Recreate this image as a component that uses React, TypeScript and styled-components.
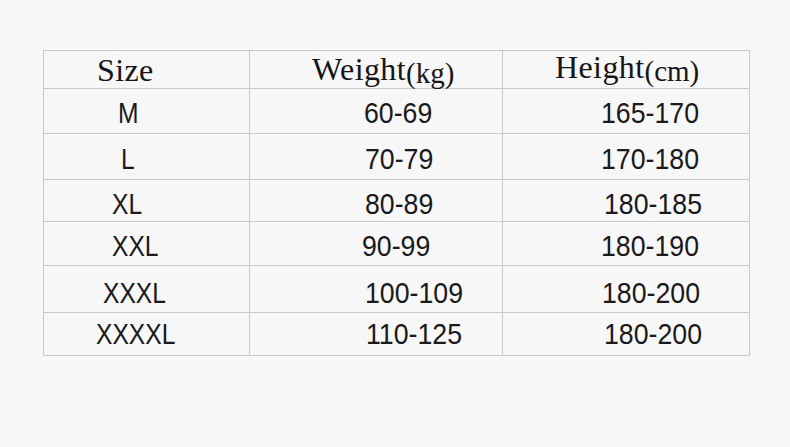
import React from "react";
import styled, { createGlobalStyle } from "styled-components";

const Global = createGlobalStyle`
  html, body { margin: 0; padding: 0; background: #f7f7f7; }
  body { width: 790px; height: 447px; overflow: hidden; }
`;

const Page = styled.div`
  box-sizing: border-box;
  width: 790px;
  height: 447px;
  padding: 50px 0 0 43px;
  background: #f7f7f7;
`;

const Table = styled.div`
  display: grid;
  grid-template-columns: 206px 253px 247px;
  width: 707px;
  box-sizing: border-box;
  border-top: 1px solid #c9c9c9;
  border-left: 1px solid #c9c9c9;
`;

const Cell = styled.div<{ $h: number; $top: number; $left: number }>`
  box-sizing: border-box;
  height: ${(p) => p.$h}px;
  padding: ${(p) => p.$top}px 0 0 ${(p) => p.$left}px;
  border-right: 1px solid #c9c9c9;
  border-bottom: 1px solid #c9c9c9;
  white-space: nowrap;
  overflow: visible;
  color: #161616;
`;

const HeadText = styled.span`
  font-family: "Liberation Serif", "Times New Roman", serif;
  font-size: 32px;
  line-height: 1;
  display: inline-block;
  letter-spacing: 0.4px;
`;

const Unit = styled.span`
  font-size: 29px;
  position: relative;
  top: 3px;
  letter-spacing: 0;
`;

const BodyText = styled.span<{ $squeeze: number }>`
  font-family: "Liberation Sans", Arial, sans-serif;
  font-size: 30px;
  line-height: 1;
  display: inline-block;
  transform: scaleX(${(p) => p.$squeeze});
  transform-origin: left center;
  color: #1a1a1a;
`;

type Row = { h: number; top: number; cells: { text: string; left: number }[] };

const header = {
  h: 38,
  cells: [
    { main: "Size", unit: "", left: 53, top: 3 },
    { main: "Weight", unit: "(kg)", left: 62, top: 2 },
    { main: "Height", unit: "(cm)", left: 52, top: 0 },
  ],
};

const rows: Row[] = [
  { h: 45, top: 9, cells: [{ text: "M", left: 74 }, { text: "60-69", left: 114 }, { text: "165-170", left: 98 }] },
  { h: 46, top: 10, cells: [{ text: "L", left: 77 }, { text: "70-79", left: 115 }, { text: "170-180", left: 98 }] },
  { h: 42, top: 9, cells: [{ text: "XL", left: 68 }, { text: "80-89", left: 115 }, { text: "180-185", left: 101 }] },
  { h: 44, top: 9, cells: [{ text: "XXL", left: 68 }, { text: "90-99", left: 112 }, { text: "180-190", left: 98 }] },
  { h: 47, top: 12, cells: [{ text: "XXXL", left: 59 }, { text: "100-109", left: 115 }, { text: "180-200", left: 99 }] },
  { h: 43, top: 6, cells: [{ text: "XXXXL", left: 52 }, { text: "110-125", left: 116 }, { text: "180-200", left: 101 }] },
];

export default function App() {
  return (
    <Page>
      <Global />
      <Table>
        {header.cells.map((c, i) => (
          <Cell key={"h" + i} $h={header.h} $top={c.top} $left={c.left}>
            <HeadText>
              {c.main}
              {c.unit && <Unit>{c.unit}</Unit>}
            </HeadText>
          </Cell>
        ))}
        {rows.map((r, ri) =>
          r.cells.map((c, ci) => (
            <Cell key={ri + "-" + ci} $h={r.h} $top={r.top} $left={c.left}>
              <BodyText $squeeze={ci === 0 ? 0.82 : 0.89}>{c.text}</BodyText>
            </Cell>
          ))
        )}
      </Table>
    </Page>
  );
}
